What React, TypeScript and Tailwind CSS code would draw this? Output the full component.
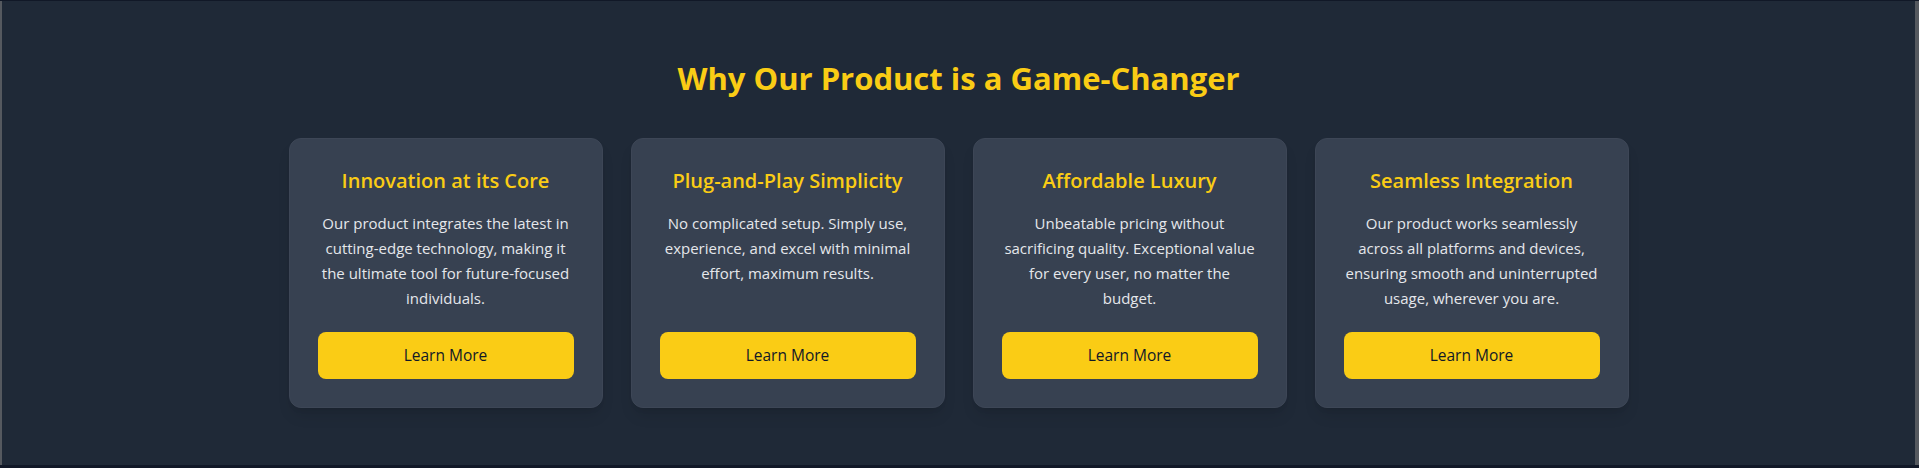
import React from "react";

interface Feature {
  title: string;
  text: string;
}

const features: Feature[] = [
  {
    title: "Innovation at its Core",
    text: "Our product integrates the latest in cutting-edge technology, making it the ultimate tool for future-focused individuals.",
  },
  {
    title: "Plug-and-Play Simplicity",
    text: "No complicated setup. Simply use, experience, and excel with minimal effort, maximum results.",
  },
  {
    title: "Affordable Luxury",
    text: "Unbeatable pricing without sacrificing quality. Exceptional value for every user, no matter the budget.",
  },
  {
    title: "Seamless Integration",
    text: "Our product works seamlessly across all platforms and devices, ensuring smooth and uninterrupted usage, wherever you are.",
  },
];

function FeatureCard({ title, text }: Feature) {
  return (
    <div className="flex flex-col items-center rounded-xl border border-[#3d4656] bg-[#374151] p-7 text-center shadow-lg">
      <h3 className="mb-4 text-[20px] leading-7 font-semibold text-[#facc15]">{title}</h3>
      <p className="mb-[21px] text-[15px] leading-[25px] text-[#e5e7eb]">{text}</p>
      <button className="mt-auto h-[47px] w-64 rounded-lg bg-[#facc15] text-[15.5px] font-medium text-[#111827]">
        Learn More
      </button>
    </div>
  );
}

export default function App() {
  return (
    <div className="flex h-[468px] w-full flex-col bg-[#111827] pt-px pb-[3px]" style={{ fontFamily: "'Open Sans', 'Noto Sans', sans-serif" }}>
      <div className="flex flex-1 border-r-4 border-l-2 border-[#55595f]">
        <section className="flex flex-1 flex-col items-center bg-[#1f2937] pt-[59px]">
          <h2 className="mb-[42px] text-[31px] leading-9 font-bold text-[#facc15]">
            Why Our Product is a Game-Changer
          </h2>
          <div className="grid w-[1340px] grid-cols-4 gap-[28px]">
            {features.map((f) => (
              <FeatureCard key={f.title} {...f} />
            ))}
          </div>
        </section>
      </div>
    </div>
  );
}
